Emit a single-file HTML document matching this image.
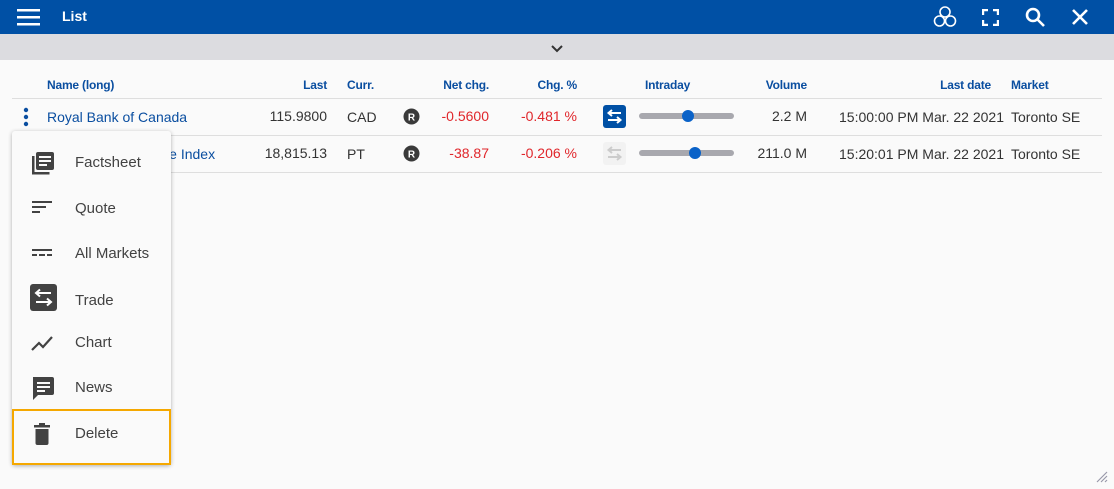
<!DOCTYPE html><html><head><style>
*{margin:0;padding:0;box-sizing:border-box}
body{width:1114px;height:489px;background:#fafafa;font-family:"Liberation Sans",sans-serif;position:relative;overflow:hidden;color:#333}
.a{position:absolute;white-space:nowrap}
.h{font-size:12px;font-weight:bold;color:#0a4ea0;top:78px;letter-spacing:-0.2px}
.r{text-align:right}
.c{font-size:14px;color:#333}
.red{color:#e0262b}
.line{position:absolute;left:12px;width:1090px;height:1px;background:#dedede}
.mi{position:absolute;left:75px;font-size:15px;color:#424242}
.ic{position:absolute;left:30px}
</style></head><body>
<div class="a" style="left:0;top:0;width:1114px;height:34px;background:#0050a5"></div>
<div class="a" style="left:0;top:34px;width:1114px;height:26px;background:#dcdce0"></div>
<svg class="a" style="left:17px;top:9px" width="23" height="17"><rect y="0" width="23" height="2.5" fill="#fff"/><rect y="7" width="23" height="2.5" fill="#fff"/><rect y="14" width="23" height="2.5" fill="#fff"/></svg>
<div class="a" style="left:62px;top:8px;color:#fff;font-size:14px;font-weight:bold">List</div>
<svg class="a" style="left:930px;top:4px" width="30" height="26" fill="none" stroke="#fff" stroke-width="1.6"><circle cx="15" cy="8" r="5"/><circle cx="9.5" cy="17" r="5"/><circle cx="20.5" cy="17" r="5"/></svg>
<svg class="a" style="left:982px;top:9px" width="17" height="17" fill="none" stroke="#fff" stroke-width="2.4"><path d="M1 6V1h5M11 1h5v5M16 11v5h-5M6 16H1v-5"/></svg>
<svg class="a" style="left:1024px;top:6px" width="22" height="22" fill="none" stroke="#fff" stroke-width="2.6"><circle cx="9" cy="9" r="6"/><path d="M13.5 13.5l6.5 6.5"/></svg>
<svg class="a" style="left:1072px;top:9px" width="16" height="16" stroke="#fff" stroke-width="2.6"><path d="M1 1l14 14M15 1L1 15"/></svg>
<svg class="a" style="left:551px;top:45px" width="12" height="8" fill="none" stroke="#333" stroke-width="2"><path d="M1 1l5 5 5-5"/></svg>

<div class="a h" style="left:47px">Name (long)</div>
<div class="a h r" style="right:787px">Last</div>
<div class="a h" style="left:347px">Curr.</div>
<div class="a h r" style="right:625px">Net chg.</div>
<div class="a h r" style="right:537px">Chg. %</div>
<div class="a h" style="left:645px">Intraday</div>
<div class="a h r" style="right:307px">Volume</div>
<div class="a h r" style="right:123px">Last date</div>
<div class="a h" style="left:1011px">Market</div>
<div class="line" style="top:98px"></div>
<div class="line" style="top:135px"></div>
<div class="line" style="top:172px"></div>

<svg class="a" style="left:23px;top:107px" width="6" height="20" fill="#0a4ea0"><circle cx="3" cy="3" r="2.2"/><circle cx="3" cy="10" r="2.2"/><circle cx="3" cy="17" r="2.2"/></svg>
<div class="a c" style="left:47px;top:109px;color:#0a4ea0">Royal Bank of Canada</div>
<div class="a c r" style="right:787px;top:108px">115.9800</div>
<div class="a c" style="left:347px;top:109px">CAD</div>
<div class="a c r red" style="right:625px;top:108px">-0.5600</div>
<div class="a c r red" style="right:537px;top:108px">-0.481 %</div>
<div class="a c r" style="right:307px;top:108px">2.2 M</div>
<div class="a c r" style="right:110px;top:109px">15:00:00 PM Mar. 22 2021</div>
<div class="a c" style="left:1011px;top:109px">Toronto SE</div>

<div class="a c" style="left:47px;top:146px;color:#0a4ea0">S&amp;P/TSX Composite Index</div>
<div class="a c r" style="right:787px;top:145px">18,815.13</div>
<div class="a c" style="left:347px;top:146px">PT</div>
<div class="a c r red" style="right:625px;top:145px">-38.87</div>
<div class="a c r red" style="right:537px;top:145px">-0.206 %</div>
<div class="a c r" style="right:307px;top:145px">211.0 M</div>
<div class="a c r" style="right:110px;top:146px">15:20:01 PM Mar. 22 2021</div>
<div class="a c" style="left:1011px;top:146px">Toronto SE</div>

<svg class="a" style="left:403px;top:108px" width="17" height="17"><circle cx="8.5" cy="8.5" r="8" fill="#3a3a3a"/><text x="8.5" y="12.5" font-size="10" font-weight="bold" fill="#fff" text-anchor="middle" font-family="Liberation Sans">R</text></svg>
<svg class="a" style="left:403px;top:145px" width="17" height="17"><circle cx="8.5" cy="8.5" r="8" fill="#3a3a3a"/><text x="8.5" y="12.5" font-size="10" font-weight="bold" fill="#fff" text-anchor="middle" font-family="Liberation Sans">R</text></svg>
<svg class="a" style="left:603px;top:105px" width="23" height="23"><rect width="23" height="23" rx="3" fill="#0050a5"/><path d="M18 8H6M9 5L5.5 8 9 11M5 15h12M14 12l3.5 3-3.5 3" stroke="#fff" stroke-width="2" fill="none"/></svg>
<svg class="a" style="left:603px;top:142px" width="23" height="23"><rect width="23" height="23" rx="3" fill="#f2f2f2"/><path d="M18 8H6M9 5L5.5 8 9 11M5 15h12M14 12l3.5 3-3.5 3" stroke="#ccc" stroke-width="2" fill="none"/></svg>
<div class="a" style="left:639px;top:113px;width:95px;height:6px;border-radius:3px;background:#a8a8ae"></div>
<div class="a" style="left:682px;top:110px;width:12px;height:12px;border-radius:6px;background:#0a62c8"></div>
<div class="a" style="left:639px;top:150px;width:95px;height:6px;border-radius:3px;background:#a8a8ae"></div>
<div class="a" style="left:689px;top:147px;width:12px;height:12px;border-radius:6px;background:#0a62c8"></div>

<div class="a" style="left:12px;top:131px;width:159px;height:334px;background:#fafafa;border-radius:3px;box-shadow:0 1px 4px rgba(0,0,0,.3)"></div>
<div class="a" style="left:12px;top:409px;width:159px;height:56px;border:2px solid #f5a800"></div>
<svg class="ic" style="top:151px" width="26" height="26" fill="#424242"><path d="M2 5h2.5v16h15V23.5H2z"/><rect x="6" y="1" width="18" height="18" rx="2"/><rect x="9" y="5" width="12" height="2" fill="#fafafa"/><rect x="9" y="9" width="12" height="2" fill="#fafafa"/><rect x="9" y="13" width="8" height="2" fill="#fafafa"/></svg>
<div class="mi" style="top:154px">Factsheet</div>
<svg class="ic" style="top:200px" width="24" height="16" fill="#424242"><rect x="2" y="1" width="20" height="2"/><rect x="2" y="6" width="14" height="2"/><rect x="2" y="11" width="8" height="2"/></svg>
<div class="mi" style="top:200px">Quote</div>
<svg class="ic" style="top:248px" width="24" height="10" fill="#424242"><rect x="2" y="1" width="20" height="2"/><rect x="2" y="6" width="5" height="2"/><rect x="9" y="6" width="6" height="2"/><rect x="17" y="6" width="5" height="2"/></svg>
<div class="mi" style="top:245px">All Markets</div>
<svg class="a" style="left:30px;top:284px" width="27" height="27"><rect width="27" height="27" rx="3" fill="#424242"/><path d="M21 9H6M10 5.5L6 9l4 3.5M6 18h15M17 14.5l4 3.5-4 3.5" stroke="#fff" stroke-width="2" fill="none"/></svg>
<div class="mi" style="top:292px">Trade</div>
<svg class="ic" style="top:334px" width="24" height="18" fill="none" stroke="#424242" stroke-width="2.2"><path d="M2 16l7-7 4 4 9-10"/></svg>
<div class="mi" style="top:334px">Chart</div>
<svg class="ic" style="top:376px" width="26" height="26" fill="#424242"><path d="M3 1h19a2 2 0 0 1 2 2v14a2 2 0 0 1-2 2H8l-5 5z"/><rect x="7" y="6" width="13" height="2" fill="#fafafa"/><rect x="7" y="10" width="13" height="2" fill="#fafafa"/><rect x="7" y="14" width="8" height="2" fill="#fafafa"/></svg>
<div class="mi" style="top:379px">News</div>
<svg class="ic" style="top:423px" width="24" height="22" fill="#424242"><rect x="4" y="2" width="16" height="2.5"/><rect x="9" y="0" width="6" height="3"/><path d="M5.5 6h13v14a2 2 0 0 1-2 2h-9a2 2 0 0 1-2-2z"/></svg>
<div class="mi" style="top:425px">Delete</div>
<svg class="a" style="left:1096px;top:471px" width="12" height="12" stroke="#99a" stroke-width="1.2"><path d="M11 1L1 11M11 5L5 11M11 9l-2 2"/></svg>
</body></html>
